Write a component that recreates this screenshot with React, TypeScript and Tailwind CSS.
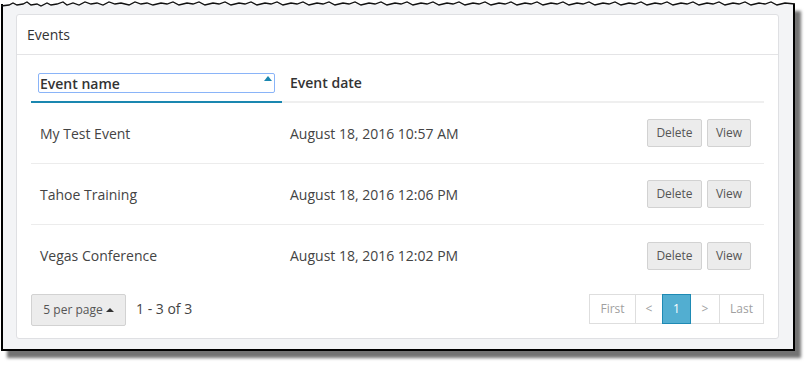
const events = [
  { name: 'My Test Event', date: 'August 18, 2016 10:57 AM' },
  { name: 'Tahoe Training', date: 'August 18, 2016 12:06 PM' },
  { name: 'Vegas Conference', date: 'August 18, 2016 12:02 PM' },
];

const tornEdge =
  'M0 6 L8 5 L12 3 L16 5 L22 4 L26 2 L30 5 L36 4 L40 6 L46 3 L50 5 L56 4 L62 2 L66 5 L72 3 L78 5 L84 2 L90 4 L96 3 L102 5 L108 2 L114 4 L120 3 L128 5 L134 2 L140 4 L146 3 L152 5 L160 3 L166 4 L172 2 L178 5 L186 3 L192 4 L198 2 L204 5 L212 3 L218 4 L224 2 L230 5 L238 3 L244 4 L250 2 L256 5 L264 3 L270 4 L276 2 L282 5 L290 3 L296 4 L302 2 L308 5 L316 3 L322 4 L328 2 L334 5 L342 3 L348 4 L354 2 L360 5 L368 3 L374 4 L380 2 L386 5 L394 3 L400 4 L406 2 L412 5 L420 3 L426 4 L432 2 L438 5 L446 3 L452 4 L458 2 L464 5 L472 3 L478 4 L484 2 L490 5 L498 3 L504 4 L510 2 L516 5 L524 3 L530 4 L536 2 L542 5 L550 3 L556 4 L562 2 L568 5 L576 3 L582 4 L588 2 L594 5 L602 3 L608 4 L614 2 L620 5 L628 3 L634 4 L640 2 L646 5 L654 3 L660 4 L666 2 L672 5 L680 3 L686 4 L692 2 L698 5 L706 3 L712 4 L718 2 L724 5 L732 3 L738 4 L744 2 L750 5 L758 3 L764 4 L770 2 L776 5 L784 3 L794 4';

const GrayButton = ({ children, className = '' }: { children: React.ReactNode; className?: string }) => (
  <button
    className={`rounded-[2px] border border-[#d2d2d2] bg-[#ececec] text-[12px] text-[#555] ${className}`}
  >
    {children}
  </button>
);

const Pager = () => {
  const cell = 'flex h-full items-center justify-center border-l border-[#dedede] text-[12px] text-[#a0a0a0]';
  return (
    <div className="flex h-[30px] border border-[#dedede] border-l-0 bg-white">
      <div className={`${cell} w-[46px]`}>First</div>
      <div className={`${cell} w-[27px]`}>&lt;</div>
      <div className="-my-px flex h-[30px] w-[29px] items-center justify-center border border-[#1e8ab4] bg-[#52aed1] text-[12px] text-white">
        1
      </div>
      <div className={`${cell} w-[28px] border-l-0`}>&gt;</div>
      <div className={`${cell} w-[44px]`}>Last</div>
    </div>
  );
};

export default function App() {
  return (
    <div className="h-[366px] w-[809px] bg-white font-['Open_Sans','Liberation_Sans',sans-serif] text-[#333]">
      <div className="relative ml-px pt-[4px]">
        <svg className="absolute left-0 top-0" width="796" height="10">
          <path d={tornEdge} fill="none" stroke="#111" strokeWidth="1.3" />
        </svg>
        <div className="h-[347px] w-[794px] border-2 border-t-0 border-black bg-[#f3f4f6] pb-[10px] pl-[13px] pr-[14px] pt-[10px] shadow-[6px_7px_3px_rgba(0,0,0,0.55)]">
          <div className="flex h-full flex-col rounded-[3px] border border-[#dfe0e3] bg-white">
            <div className="flex h-[40px] items-center border-b border-[#e4e4e6] px-[10px] text-[14px] text-[#333]">
              Events
            </div>

            <div className="flex flex-1 flex-col px-[14px] pt-[18px]">
              <div className="flex text-[14px] font-semibold text-[#333]">
                <div className="w-[251px] border-b-2 border-[#1a87b0] px-[7px] pb-[8px]">
                  <div className="relative flex h-[20px] items-center rounded-[2px] border border-[#8ab4f8] px-[1px]">
                    Event name
                    <span className="absolute right-[2px] top-[2px] h-0 w-0 border-x-[4px] border-b-[5px] border-x-transparent border-b-[#1a87b0]" />
                  </div>
                </div>
                <div className="flex flex-1 items-center border-b-2 border-[#efefef] px-[8px] pb-[8px]">
                  <span className="h-[20px] leading-[20px]">Event date</span>
                </div>
              </div>

              {events.map((ev, i) => (
                <div
                  key={ev.name}
                  className={`flex h-[61px] items-center text-[14px] text-[#444] ${i < events.length - 1 ? 'border-b border-[#ececec]' : ''}`}
                >
                  <div className="w-[251px] pl-[9px]">{ev.name}</div>
                  <div className="flex-1 pl-[8px]">{ev.date}</div>
                  <div className="flex gap-[5px] pr-[13px]">
                    <GrayButton className="h-[28px] w-[55px]">Delete</GrayButton>
                    <GrayButton className="h-[28px] w-[44px]">View</GrayButton>
                  </div>
                </div>
              ))}

              <div className="mt-[8px] flex items-start justify-between">
                <div className="flex items-center gap-[10px]">
                  <GrayButton className="flex h-[32px] w-[95px] items-center justify-center gap-[3px] text-[#444]">
                    5 per page
                    <span className="h-0 w-0 border-x-[4px] border-b-[4px] border-x-transparent border-b-[#333]" />
                  </GrayButton>
                  <span className="-mt-[4px] text-[14px] text-[#444]">1 - 3 of 3</span>
                </div>
                <Pager />
              </div>
            </div>
          </div>
        </div>
      </div>
    </div>
  );
}
